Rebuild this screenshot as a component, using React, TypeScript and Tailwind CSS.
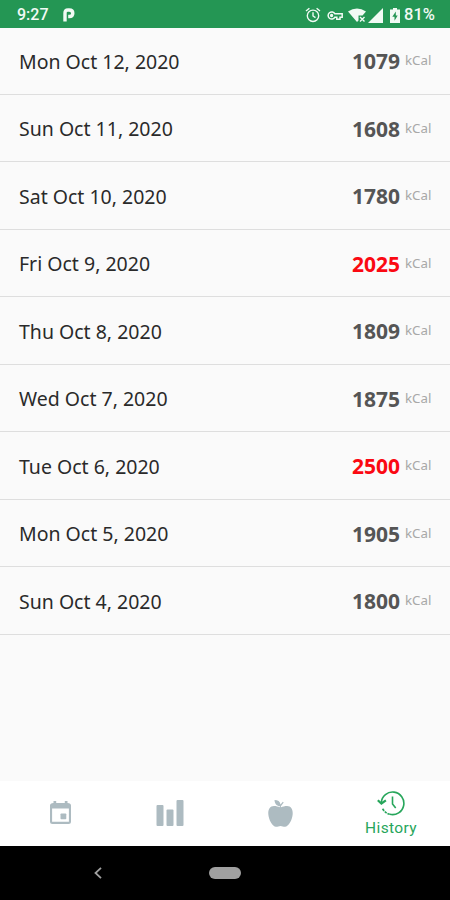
import React from 'react';

interface HistoryEntry {
  date: string;
  kcal: number;
}

const DAILY_LIMIT = 2000;

const entries: HistoryEntry[] = [
  { date: 'Mon Oct 12, 2020', kcal: 1079 },
  { date: 'Sun Oct 11, 2020', kcal: 1608 },
  { date: 'Sat Oct 10, 2020', kcal: 1780 },
  { date: 'Fri Oct 9, 2020', kcal: 2025 },
  { date: 'Thu Oct 8, 2020', kcal: 1809 },
  { date: 'Wed Oct 7, 2020', kcal: 1875 },
  { date: 'Tue Oct 6, 2020', kcal: 2500 },
  { date: 'Mon Oct 5, 2020', kcal: 1905 },
  { date: 'Sun Oct 4, 2020', kcal: 1800 },
];

const StatusBar: React.FC = () => (
  <header className="flex h-7 shrink-0 items-center bg-[#249654] pt-0.5 pl-[17px] font-['Roboto',sans-serif] text-[16px] font-medium text-[#f1faf4]">
    <span className="w-[46px]">9:27</span>
    <svg className="h-[14px] w-3" viewBox="0 0 12 14" fill="none" stroke="currentColor" strokeWidth="3.4">
      <path d="M2 13.5V5Q2 2 5 2H6.2Q9.800 2 9.800 5.200T6.200 8.500H5.200" />
    </svg>
    {/* System icons */}
    <svg className="ml-auto h-4 w-4" viewBox="0 0 16 16" fill="none" stroke="currentColor" strokeWidth="1.4">
      <circle cx="8" cy="8.8" r="5.7" />
      <path d="M8 5.2V9l2.5 1.7M1 4l3.4-2.8M15 4l-3.4-2.8" />
    </svg>
    <svg className="ml-1.5 h-[9px] w-4" viewBox="0 0 16 9" fill="none" stroke="currentColor" strokeWidth="1.5">
      <path d="M7.900 2.800A3.600 3.600 0 1 0 7.900 6.200H9.800V8.200h3.200V6.200h2.200V2.800Z" />
      <circle cx="4.600" cy="4.500" r="0.900" fill="currentColor" />
    </svg>
    <svg className="ml-[5px] h-[15px] w-[19px]" viewBox="0 0 19 15" fill="none">
      <path d="M0 3.4Q9 -2.6 18 3.4L14.5 7.5H10.5V12.5L9 14Z" fill="currentColor" />
      <path d="m12 9 4.5 4.5m0-4.5L12 13.500" stroke="currentColor" strokeWidth="1.4" />
    </svg>
    <svg className="ml-px h-[15px] w-[15px]" viewBox="0 0 15 15">
      <path d="M15 0v15H0Z" fill="currentColor" />
    </svg>
    <svg className="ml-[7px] h-[15px] w-[10px]" viewBox="0 0 10 15">
      <path d="M3 0h4v1.500h3V15H0V1.500h3Z" fill="currentColor" />
      <path d="M5.800 3.600 2.300 8.800h2.200v3.900l3.200-5.200H5.800Z" fill="#249654" />
    </svg>
    <span className="ml-1 w-[46px] text-[16.5px]">81%</span>
  </header>
);

const HistoryRow: React.FC<{ entry: HistoryEntry }> = ({ entry }) => (
  <li className="flex h-[67.5px] items-center justify-between border-b border-[#dedede] pt-0.5 pr-[17px] pl-[19px]">
    <span className="text-[19.5px] text-[#2a2a2a]">{entry.date}</span>
    <span className="flex items-center">
      <span className={`pt-px text-[21px] font-bold ${entry.kcal > DAILY_LIMIT ? 'text-[#fa0912]' : 'text-[#555555]'}`}>
        {entry.kcal}
      </span>
      <span className="ml-[5px] w-7 text-[13.3px] text-[#a8a8a8]">kCal</span>
    </span>
  </li>
);

const TabBar: React.FC = () => (
  <nav className="grid h-[65px] shrink-0 grid-cols-[120px_100px_120px_102px] items-center bg-white text-[#adbbc1]">
    <div className="flex justify-center pb-0.5">
      <svg className="h-[23px] w-[21px]" viewBox="0 0 21 23">
        <path
          d="M3.5 0h2.7v2h8.6V0h2.7v2Q21 2 21 4.5v16Q21 23 18.5 23h-16Q0 23 0 20.5v-16Q0 2 3.5 2Zm-1.4 7.5v13.3h16.8V7.5Z"
          fill="currentColor"
          fillRule="evenodd"
        />
        <rect x="10.5" y="12.5" width="5.8" height="5.8" rx="0.8" fill="currentColor" />
      </svg>
    </div>
    <div className="flex justify-center pb-px">
      <svg className="h-[26px] w-7" viewBox="0 0 28 26" fill="currentColor">
        <rect x="0.5" y="5" width="7" height="21" rx="1" />
        <rect x="10.5" y="9.5" width="7" height="16.5" rx="1" />
        <rect x="20.5" y="0" width="7" height="26" rx="1" />
      </svg>
    </div>
    <div className="flex justify-center">
      <svg className="h-[27px] w-[25px]" viewBox="0 0 25 27" fill="currentColor">
        <path d="M12.500 7.500C15 6.500 16.800 6 19 6c4 0 6 3.300 5.700 8C24.300 20 20.500 26.700 17 26.700c-1.800 0-2.800-.8-4.500-.8s-2.700.8-4.500.8C4.500 26.700.7 20 .3 14 0 9.300 2 6 6 6c2.200 0 4 .5 6.500 1.500Z" />
        <path d="M6.500 0c3.500 0 5.500 1.300 6 4.500l2.300-2.700.9.700-2.800 3.700v1.800h-1V6.200C8.200 5.700 6.700 3.500 6.500 0Z" />
      </svg>
    </div>
    <div className="flex flex-col items-center pt-0.5 text-[#27a65b]">
      <svg className="h-[25px] w-7" viewBox="0 0 28 25" fill="none" stroke="currentColor" strokeWidth="1.6">
        <path d="M4.300 11.500A11.300 11.300 0 1 1 12.800 23.300" />
        <path d="M12.800 23.300Q8.400 22.300 5.400 17.500" strokeDasharray="2.500 0.900" />
        <path d="M15.500 5.500V13l3.200 4" />
        <path d="m.8 9.300 3.600 3.200 4.500-3.200" strokeWidth="2.200" />
      </svg>
      <span className="pt-px font-['Roboto',sans-serif] text-[15.5px] leading-[22px] tracking-[0.35px]">History</span>
    </div>
  </nav>
);

export default function App() {
  return (
    <div className="flex h-[900px] w-[450px] flex-col overflow-hidden bg-[#fafafa] font-['Noto_Sans',sans-serif]">
      <StatusBar />
      <main className="flex-1">
        <ul className="-mt-px">
          {entries.map((entry) => (
            <HistoryRow key={entry.date} entry={entry} />
          ))}
        </ul>
      </main>
      <TabBar />

      {/* Android navigation */}
      <footer className="flex h-[54px] shrink-0 items-center bg-black pl-[94px] text-[#a0a0a0]">
        <svg className="h-3 w-2" viewBox="0 0 8 12" fill="none" stroke="currentColor" strokeWidth="1.8">
          <path d="M7 .8 1.500 6 7 11.200" />
        </svg>
        <span className="ml-[107px] h-3 w-8 rounded-full bg-[#a0a0a0]" />
      </footer>
    </div>
  );
}
